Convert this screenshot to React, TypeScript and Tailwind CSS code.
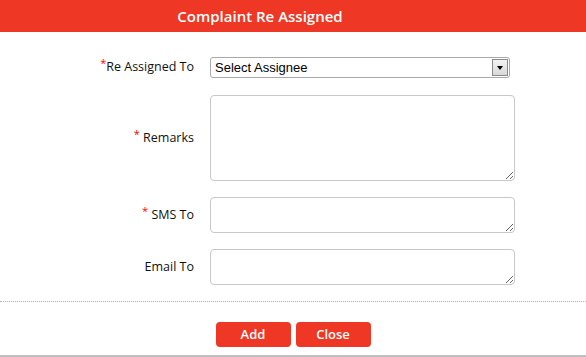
import React from "react";

const Req = () => <span className="relative -top-[4px] text-[11px] text-[#ff0000]">*</span>;

const App = () => {
  return (
    <div className="h-[357px] w-[586px] overflow-hidden bg-white font-['Open_Sans',sans-serif]">
      {/* Header */}
      <div className="flex h-[32px] items-center justify-center bg-[#ee3724] pr-[66px]">
        <h1 className="text-[15px] font-semibold text-white">Complaint Re Assigned</h1>
      </div>

      {/* Form */}
      <div className="grid grid-cols-[194px_304px] gap-x-[16px] pt-[25px] text-[12.5px] text-[#111]">
        <label className="flex h-[21px] items-center justify-end">
          <Req />
          Re Assigned To
        </label>
        <div className="flex h-[21px] w-[300px] items-center rounded-[3px] border border-[#a9a9a9] pl-[4px] pr-[1px] font-['Liberation_Sans',sans-serif] text-[13px] font-normal text-black">
          <span className="flex-1">Select Assignee</span>
          <span className="flex h-[17px] w-[16px] items-center justify-center border border-[#8a8a8a] bg-gradient-to-b from-[#f4f4f4] to-[#d8d8d8]">
            <span className="h-0 w-0 border-x-[3px] border-t-[4px] border-x-transparent border-t-black" />
          </span>
        </div>

        <label className="mt-[17px] flex h-[86px] items-center justify-end">
          <Req />
          &nbsp;Remarks
        </label>
        <textarea className="mt-[17px] h-[86px] w-[305px] rounded-[4px] border border-[#c8c8c8] outline-none" />

        <label className="mt-[16px] flex h-[36px] items-center justify-end">
          <Req />
          &nbsp;SMS To
        </label>
        <textarea className="mt-[16px] h-[36px] w-[305px] rounded-[4px] border border-[#c8c8c8] outline-none" />

        <label className="mt-[16px] flex h-[36px] items-center justify-end">Email To</label>
        <textarea className="mt-[16px] h-[36px] w-[305px] rounded-[4px] border border-[#c8c8c8] outline-none" />
      </div>

      <div className="mt-[16px] border-t border-dotted border-[#b5b5b5]" />

      {/* Footer */}
      <div className="flex justify-center gap-[5px] pt-[20px] pb-[8px]">
        <button className="h-[25px] w-[75px] rounded-[4px] bg-[#ee3724] text-[13px] font-semibold text-white">
          Add
        </button>
        <button className="h-[25px] w-[75px] rounded-[4px] bg-[#ee3724] text-[13px] font-semibold text-white">
          Close
        </button>
      </div>
      <div className="h-[2px] bg-[#c0c0c0]" />
    </div>
  );
};

export default App;
